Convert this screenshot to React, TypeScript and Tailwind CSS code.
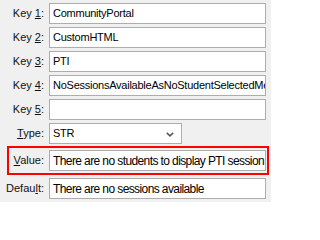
import React from "react";

function Label({ pre, acc, post }: { pre: string; acc: string; post: string }) {
  return (
    <div className="w-[44px] shrink-0 text-right text-[11px] leading-none text-[#111] whitespace-nowrap">
      {pre}
      <span className="underline underline-offset-[1px]">{acc}</span>
      {post}
    </div>
  );
}

function Field({ text, big }: { text?: string; big?: boolean }) {
  return (
    <div
      className={
        "w-[217px] h-[21px] shrink-0 bg-white border border-[#adadad] flex items-center pl-[3px] overflow-hidden whitespace-nowrap text-black " +
        (big ? "text-[12px] tracking-[-0.6px]" : "text-[11px] tracking-[-0.25px]")
      }
    >
      {text}
    </div>
  );
}

export default function App() {
  const keys = [
    "CommunityPortal",
    "CustomHTML",
    "PTI",
    "NoSessionsAvailableAsNoStudentSelectedMessage",
    "",
  ];
  return (
    <div className="w-[271px] h-[202px] bg-[#f0f0f0] pt-[3px] flex flex-col gap-[3px] font-['Liberation_Sans',Arial,sans-serif] overflow-hidden">
      {keys.map((k, i) => (
        <div key={i} className="flex items-center gap-[5px]">
          <Label pre="Key " acc={String(i + 1)} post=":" />
          <Field text={k} />
        </div>
      ))}
      <div className="flex items-center gap-[5px]">
        <Label pre="" acc="T" post="ype:" />
        <div className="w-[133px] h-[21px] bg-white border border-[#adadad] flex items-center justify-between pl-[3px] pr-[7px] text-[11px] tracking-[-0.25px] text-black">
          <span>STR</span>
          <svg width="8" height="5" viewBox="0 0 8 5" className="mt-[1px]">
            <path d="M0.8 0.8 L4 3.8 L7.2 0.8" fill="none" stroke="#5a5a5a" strokeWidth="1.6" />
          </svg>
        </div>
      </div>
      <div className="-mt-[1px] ml-[7px] w-[262px] border-2 border-[#ff0000] py-[2px] pr-[1px] flex items-center gap-[5px]">
        <div className="w-[35px] shrink-0 text-right text-[11px] leading-none text-[#111] whitespace-nowrap">
          <span className="underline underline-offset-[1px]">V</span>alue:
        </div>
        <Field text="There are no students to display PTI session" big />
      </div>
      <div className="flex items-center gap-[5px]">
        <Label pre="Defau" acc="l" post="t:" />
        <Field text="There are no sessions available" big />
      </div>
    </div>
  );
}
